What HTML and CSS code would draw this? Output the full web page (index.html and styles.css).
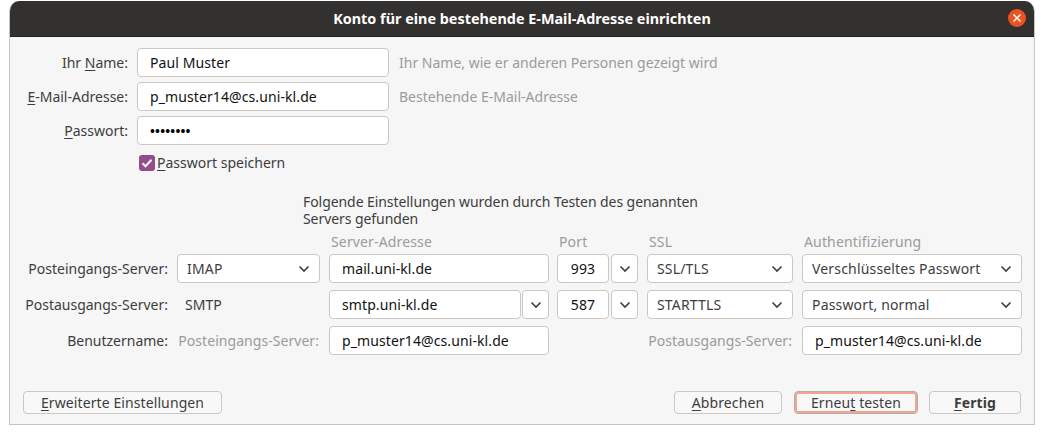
FILE: index.html
```html
<!DOCTYPE html>
<html lang="de">
<head>
<meta charset="utf-8">
<title>Konto</title>
<link rel="stylesheet" href="styles.css">
</head>
<body>
<div class="window">
  <header class="titlebar">
    <span>Konto für eine bestehende E-Mail-Adresse einrichten</span>
    <span class="close"><svg width="18" height="18" viewBox="0 0 18 18"><path d="M5.5 5.5l7 7M12.5 5.5l-7 7" stroke="#fff" stroke-width="1.5" fill="none"/></svg></span>
  </header>
  <main class="content">
    <section class="identity">
      <label class="lbl">Ihr <u>N</u>ame:</label>
      <div class="field pad-wide">Paul Muster</div>
      <span class="muted">Ihr Name, wie er anderen Personen gezeigt wird</span>
      <label class="lbl"><u>E</u>-Mail-Adresse:</label>
      <div class="field pad-wide">p_muster14@cs.uni-kl.de</div>
      <span class="muted">Bestehende E-Mail-Adresse</span>
      <label class="lbl"><u>P</u>asswort:</label>
      <div class="field pad-wide dots">••••••••</div>
      <span></span>
      <span></span>
      <div class="remember">
        <span class="check"><svg width="16" height="16" viewBox="0 0 16 16"><path d="M3.5 8.2l3 3 6-6.4" stroke="#fff" stroke-width="2" fill="none"/></svg></span>
        <span><u>P</u>asswort speichern</span>
      </div>
    </section>
    <p class="note">Folgende Einstellungen wurden durch Testen des genannten Servers gefunden</p>
    <section class="servers">
      <span></span><span></span>
      <span class="muted head">Server-Adresse</span>
      <span class="muted head port-col">Port</span>
      <span class="muted head">SSL</span>
      <span class="muted head">Authentifizierung</span>

      <span class="lbl">Posteingangs-Server:</span>
      <div class="field select">IMAP<svg class="chev" width="12" height="8" viewBox="0 0 12 8"><path d="M1.5 1.5L6 6l4.500-4.500" stroke="#3d3d3d" stroke-width="1.600" fill="none"/></svg></div>
      <div class="field">mail.uni-kl.de</div>
      <div class="combo port-col">
        <div class="field port">993</div>
        <div class="field arrow"><svg width="12" height="8" viewBox="0 0 12 8"><path d="M1.500 1.500L6 6l4.500-4.500" stroke="#3d3d3d" stroke-width="1.600" fill="none"/></svg></div>
      </div>
      <div class="field select">SSL/TLS<svg class="chev" width="12" height="8" viewBox="0 0 12 8"><path d="M1.500 1.500L6 6l4.500-4.500" stroke="#3d3d3d" stroke-width="1.600" fill="none"/></svg></div>
      <div class="field select">Verschlüsseltes Passwort<svg class="chev" width="12" height="8" viewBox="0 0 12 8"><path d="M1.500 1.500L6 6l4.500-4.500" stroke="#3d3d3d" stroke-width="1.600" fill="none"/></svg></div>

      <span class="lbl">Postausgangs-Server:</span>
      <span class="plain">SMTP</span>
      <div class="combo">
        <div class="field grow">smtp.uni-kl.de</div>
        <div class="field arrow"><svg width="12" height="8" viewBox="0 0 12 8"><path d="M1.500 1.500L6 6l4.500-4.500" stroke="#3d3d3d" stroke-width="1.600" fill="none"/></svg></div>
      </div>
      <div class="combo port-col">
        <div class="field port">587</div>
        <div class="field arrow"><svg width="12" height="8" viewBox="0 0 12 8"><path d="M1.500 1.500L6 6l4.500-4.500" stroke="#3d3d3d" stroke-width="1.600" fill="none"/></svg></div>
      </div>
      <div class="field select">STARTTLS<svg class="chev" width="12" height="8" viewBox="0 0 12 8"><path d="M1.500 1.500L6 6l4.500-4.500" stroke="#3d3d3d" stroke-width="1.600" fill="none"/></svg></div>
      <div class="field select">Passwort, normal<svg class="chev" width="12" height="8" viewBox="0 0 12 8"><path d="M1.500 1.500L6 6l4.500-4.500" stroke="#3d3d3d" stroke-width="1.600" fill="none"/></svg></div>

      <span class="lbl">Benutzername:</span>
      <span class="muted end">Posteingangs-Server:</span>
      <div class="field">p_muster14@cs.uni-kl.de</div>
      <span class="port-col"></span>
      <span class="muted end">Postausgangs-Server:</span>
      <div class="field">p_muster14@cs.uni-kl.de</div>
    </section>
    <footer class="actions">
      <button class="btn advanced"><u>E</u>rweiterte Einstellungen</button>
      <button class="btn cancel"><u>A</u>bbrechen</button>
      <button class="btn retest">Erneu<u>t</u> testen</button>
      <button class="btn done"><u>F</u>ertig</button>
    </footer>
  </main>
</div>
</body>
</html>
```
FILE: styles.css
```css
* { box-sizing: border-box; }
html, body { margin: 0; height: 100%; background: #fff; }
body {
  padding: 1px 0 0 9px;
  font-family: "Noto Sans", sans-serif;
  font-size: 14px;
  color: #3d3d3d;
}
u { text-underline-offset: 2px; text-decoration-thickness: 1px; }
.window {
  width: 1026px;
  height: 424px;
  border: 1px solid #c4c4c4;
  border-top: 0;
  border-radius: 10px 10px 0 0;
  background: #f6f6f6;
  overflow: hidden;
}
.titlebar {
  height: 36px;
  margin: 0 -1px;
  background: #333030;
  border-bottom: 1px solid #211f1f;
  color: #fff;
  font-weight: 700;
  font-size: 14.4px;
  display: flex;
  align-items: center;
  justify-content: center;
  position: relative;
}
.close {
  position: absolute;
  right: 9px;
  top: 8px;
  width: 18px;
  height: 18px;
  border-radius: 50%;
  background: #e95420;
  display: flex;
}
.content { display: flex; flex-direction: column; }
.identity {
  display: grid;
  grid-template-columns: 118px 252px 1fr;
  grid-auto-rows: 29px;
  column-gap: 9px;
  row-gap: 5px;
  margin-top: 11px;
  align-items: center;
}
.lbl { text-align: right; white-space: nowrap; }
.field {
  height: 29px;
  display: flex;
  align-items: center;
  padding: 0 12px;
  background: #fff;
  border: 1px solid #cdc7c2;
  border-radius: 4px;
  color: #111;
  letter-spacing: 0.1px;
  white-space: nowrap;
}
.pad-wide { padding-left: 12px; }
.dots { font-size: 13px; letter-spacing: 0.2px; color: #000; font-weight: 700; }
.muted { color: #9b9b9b; white-space: nowrap; }
.identity .muted { margin-left: 1px; }
.remember {
  grid-column: 2 / 4;
  align-self: start;
  display: flex;
  align-items: center;
  gap: 2px;
  margin: 2px 0 0 2px;
  height: 21px;
}
.check {
  width: 16px;
  height: 16px;
  border-radius: 3px;
  background: #924d8b;
  display: flex;
}
.note {
  width: 420px;
  margin: 14px 0 0 293px;
  line-height: 17px;
  letter-spacing: -0.07px;
  color: #3d3d3d;
}
.servers {
  display: grid;
  grid-template-columns: 158px 143px 220px 80px 146px 220px;
  grid-template-rows: 15px 29px 29px 29px;
  column-gap: 9px;
  row-gap: 7px;
  align-items: center;
  margin-top: 5px;
}
.head { padding-left: 2px; align-self: start; letter-spacing: 0.15px; }
.port-col { margin-left: -1px; }
.combo { display: flex; gap: 1px; }
.combo.port-col { gap: 2px; }
.grow { flex: 1; }
.port { width: 52px; justify-content: center; padding: 0; }
.arrow { width: 27px; padding: 0; justify-content: center; color: #3d3d3d; }
.select { justify-content: space-between; padding: 0 9px 0 9px; color: #3d3d3d; letter-spacing: 0.17px; }
.plain { padding-left: 8px; }
.end { text-align: right; padding-right: 1px; letter-spacing: 0.05px; }
.actions {
  display: flex;
  margin-top: 36px;
  padding-left: 13px;
}
.btn {
  height: 23px;
  padding: 0;
  font: inherit;
  letter-spacing: 0.1px;
  color: #3d3d3d;
  background: #f8f8f8;
  border: 1px solid #cdc7c2;
  border-radius: 4px;
}
.advanced { width: 199px; }
.cancel { width: 108px; margin-left: auto; }
.retest { width: 124px; margin-left: 12px; box-shadow: inset 0 0 0 2px #f2a58f; border-color: #b5aca7; }
.done { width: 92px; margin: 0 13px 0 11px; font-weight: 700; }
```
